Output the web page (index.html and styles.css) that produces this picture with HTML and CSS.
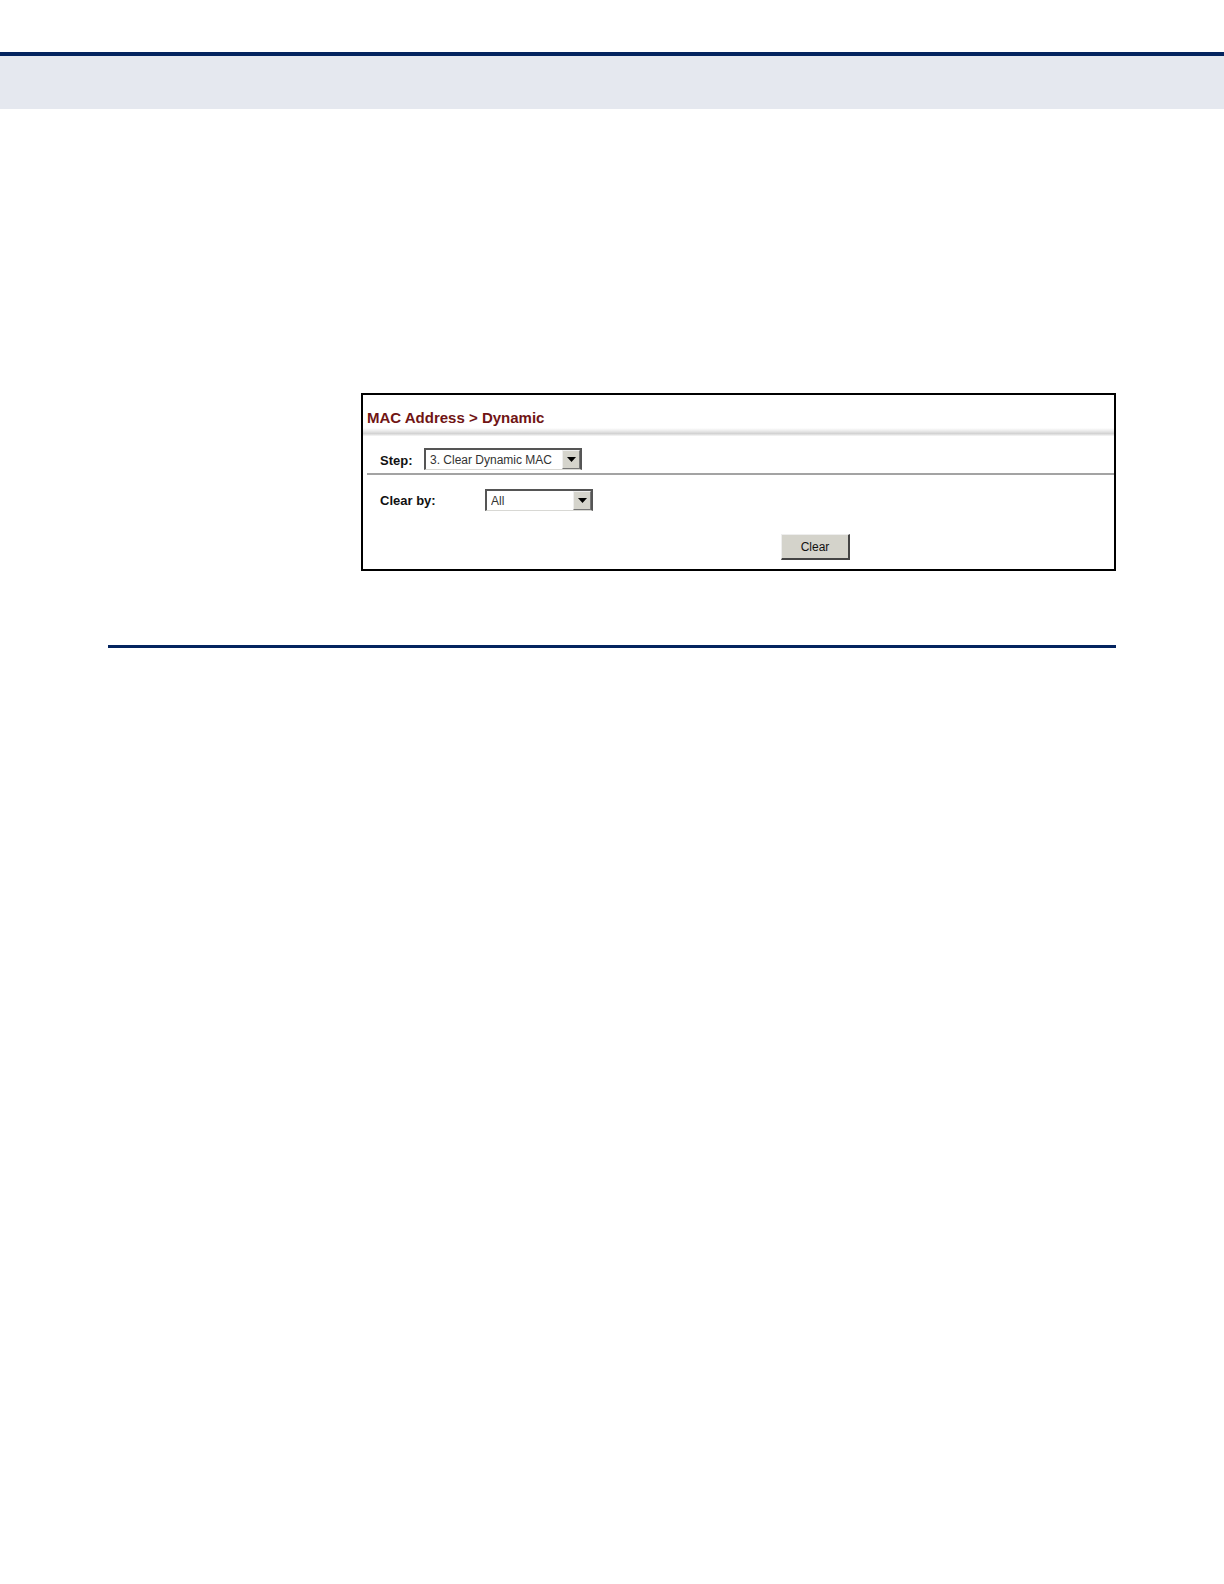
FILE: index.html
```html
<!DOCTYPE html>
<html lang="en">
<head>
<meta charset="utf-8">
<meta name="viewport" content="width=device-width, initial-scale=1">
<title>MAC Address &gt; Dynamic</title>
<link rel="stylesheet" href="styles.css">
</head>
<body>
<header class="page-band"></header>
<main class="page">
  <section class="panel">
    <h1 class="panel-title">MAC Address &gt; Dynamic</h1>
    <form class="form">
      <div class="row row-step">
        <label class="label label-step" for="step">Step:</label>
        <span class="picker picker-step">
          <select class="select" id="step">
            <option>3. Clear Dynamic MAC</option>
          </select>
          <span class="arrow"><svg width="9" height="5" viewBox="0 0 9 5" aria-hidden="true"><path d="M0 0h9L4.5 5z"/></svg></span>
        </span>
      </div>
      <div class="row row-clear">
        <label class="label label-clear" for="clear-by">Clear by:</label>
        <span class="picker picker-clear">
          <select class="select" id="clear-by">
            <option>All</option>
          </select>
          <span class="arrow"><svg width="9" height="5" viewBox="0 0 9 5" aria-hidden="true"><path d="M0 0h9L4.5 5z"/></svg></span>
        </span>
      </div>
      <div class="actions">
        <button class="button" type="button">Clear</button>
      </div>
    </form>
  </section>
  <hr class="rule">
</main>
</body>
</html>
```
FILE: styles.css
```css
* {
  box-sizing: border-box;
}

body {
  margin: 0;
  padding-top: 52px;
  background: #fff;
  color: #111;
  font-family: "Liberation Sans", Arial, sans-serif;
  font-size: 12px;
}

.page-band {
  height: 57px;
  border-top: 4px solid #04245f;
  background: #e5e8ef;
}

.page {
  padding: 284px 108px 0;
}

.panel {
  margin-left: 253px;
  border: 2px solid #000;
}

.panel-title {
  margin: 0;
  padding: 14px 4px 9px;
  background: linear-gradient(#fff, #e8e8e8 40%, #d2d2d2 70%, #f8f8f8) left bottom / 100% 8px no-repeat;
  color: #701414;
  font-size: 15px;
  line-height: 18px;
}

.row {
  display: flex;
  margin-left: 4px;
  padding-left: 13px;
}

.row-step {
  padding-top: 12px;
  padding-bottom: 3px;
  border-bottom: 2px solid #a3a3a3;
}

.row-clear {
  padding-top: 14px;
}

.label {
  font-size: 13px;
  font-weight: bold;
  line-height: 16px;
}

.label-step {
  width: 44px;
  padding-top: 5px;
}

.label-clear {
  width: 105px;
  padding-top: 4px;
}

.picker {
  display: grid;
  height: 22px;
  border: 2px solid;
  border-color: #555 #555 #d8d8d4 #555;
  border-bottom-width: 1px;
  background: #fff;
}

.picker-step {
  width: 158px;
}

.picker-clear {
  width: 108px;
}

.select,
.arrow {
  grid-area: 1 / 1;
}

.select {
  width: 100%;
  padding: 0 18px 0 4px;
  border: 0;
  background: transparent;
  appearance: none;
  color: #333;
  font: inherit;
}

.arrow {
  display: flex;
  align-items: center;
  justify-content: center;
  justify-self: end;
  width: 18px;
  border: 1px solid;
  border-color: #eee #777 #777 #eee;
  background: #d5d4cc;
  pointer-events: none;
}

.actions {
  display: grid;
  grid-template-columns: 418px 69px;
  padding: 23px 0 9px;
}

.button {
  grid-column: 2;
  height: 26px;
  padding: 0;
  border: 1px solid;
  border-color: #eee #444 #444 #eee;
  border-right-width: 2px;
  border-bottom-width: 2px;
  background: #d4d3cb;
  color: #111;
  font: inherit;
}

.rule {
  height: 3px;
  margin: 74px 0 0;
  border: 0;
  background: #04245f;
}
```
